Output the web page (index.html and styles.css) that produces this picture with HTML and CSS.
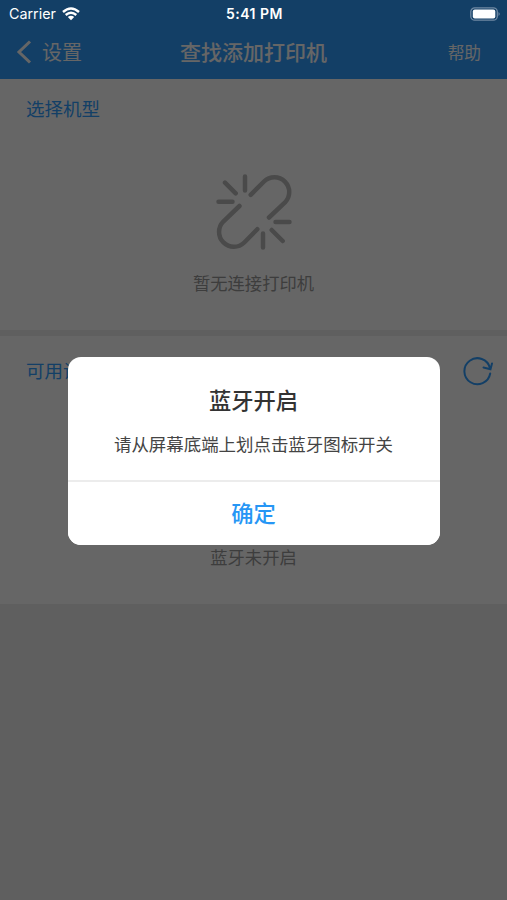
FILE: index.html
```
<!DOCTYPE html>
<html lang="zh-CN">
<head>
<meta charset="utf-8">
<title>查找添加打印机</title>
<link rel="stylesheet" href="styles.css">
</head>
<body>
<div class="screen">
  <header class="top">
    <nav class="nav">
      <div class="back">
        <svg width="18" height="26" viewBox="0 0 18 26"><path d="M14 2.500 3 13l11 10.500"/></svg>
        <span>设置</span>
      </div>
      <h1>查找添加打印机</h1>
      <span class="help">帮助</span>
    </nav>
  </header>
  <section class="panel connected">
    <h2>选择机型</h2>
    <svg class="link" width="76" height="76" viewBox="0 0 76 76">
      <path d="M34.700 20.800 48 7.500A14.850 14.850 0 0 1 69 28.500L53 43.500"/>
      <path d="M23.500 32 7.300 47.500A14.850 14.850 0 0 0 28.300 68.500L41.300 55.200"/>
      <path d="M9 8.700 19.700 19.300M29 2.500v14M2.500 27.700h14M59.500 48h14M55.700 56l11 11M47 59.500v14"/>
    </svg>
    <p>暂无连接打印机</p>
  </section>
  <section class="panel available">
    <div class="heading">
      <h2>可用设备</h2>
      <svg width="32" height="30" viewBox="0 0 32 30"><path d="M28.200 16.500A13 13 0 1 1 28 11M30 6.500 28.500 12.200 21.500 10.500"/></svg>
    </div>
    <p>蓝牙未开启</p>
  </section>
</div>
<div class="overlay">
  <div class="dialog">
    <div class="message">
      <h3>蓝牙开启</h3>
      <p>请从屏幕底端上划点击蓝牙图标开关</p>
    </div>
    <button>确定</button>
  </div>
</div>
<div class="status">
  <div class="carrier">Carrier
    <svg width="18" height="14" viewBox="0 0 18 14"><path d="M1 5Q9-2 17 5M3.700 8Q9 3.500 14.300 8"/><path class="dot" d="M5.800 10Q9 7.300 12.200 10L9 13.300Z"/></svg>
  </div>
  <time>5:41 PM</time>
  <svg class="battery" width="32" height="14" viewBox="0 0 32 14"><rect x="1.800" y=".8" width="26.500" height="12.400" rx="4"/><rect class="charge" x="3.800" y="2.500" width="22.500" height="9" rx="2"/><path d="M29.500 5Q32 7 29.500 9Z"/></svg>
</div>
</body>
</html>
```
FILE: styles.css
```
* { box-sizing: border-box; }
body { margin: 0; font-family: Inter, "Noto Sans CJK SC", sans-serif; }
h1, h2, h3, p { margin: 0; }
.screen { height: 900px; overflow: hidden; background: #eee; }
.top { height: 79px; padding-top: 25px; background: #309eff; }
.nav { display: grid; grid-template-columns: 1fr auto 1fr; align-items: center; height: 53px; padding: 0 26px 0 16px; color: #fff; }
.back { display: flex; align-items: center; gap: 8px; font-size: 20px; }
.back path { fill: none; stroke: #fff; stroke-width: 3; }
.nav h1 { font-size: 21px; font-weight: 500; margin-right: -10px; padding-bottom: 1px; }
.help { justify-self: end; font-size: 16.700px; }
.panel { background: #fff; }
.panel h2 { color: #309eff; font-size: 18.500px; line-height: 28px; font-weight: 400; }
.panel p { color: #999; font-size: 17.300px; line-height: 26px; text-align: center; }
.connected { height: 257px; padding: 16px 26px 0; border-bottom: 6px solid #eee; display: flex; flex-direction: column; }
.link { align-self: center; margin: 51px 0 21px; fill: none; stroke: #b9b9b9; stroke-width: 4.500; stroke-linecap: round; }
.available { height: 268px; padding-top: 21px; }
.heading { display: flex; justify-content: space-between; padding: 0 13px 0 26px; }
.heading svg { margin-bottom: -2px; }
.heading path { fill: none; stroke: #309eff; stroke-width: 2; stroke-linecap: round; }
.available p { margin-top: 160px; }
.overlay { position: absolute; inset: 0; display: flex; justify-content: center; align-items: flex-start; padding-top: 357px; background: rgba(0,0,0,.6); }
.dialog { width: 372px; height: 188px; border-radius: 13px; background: #fff; overflow: hidden; text-align: center; }
.message { height: 125px; padding-top: 28px; border-bottom: 2px solid #ececec; }
.message h3 { font-size: 22.300px; line-height: 32px; font-weight: 500; color: #333; }
.message p { margin-top: 15px; font-size: 17.450px; line-height: 26px; color: #444; }
.dialog button { width: 100%; height: 63px; border: 0; padding: 0 0 3px; background: #fff; color: #2696f5; font: 500 22.300px "Noto Sans CJK SC", sans-serif; }
.status { position: absolute; top: 0; left: 0; right: 0; height: 27px; display: grid; grid-template-columns: 1fr auto 1fr; align-items: center; padding: 0 6px 0 9px; color: #fff; font-size: 14.300px; }
.carrier { display: flex; align-items: center; gap: 6px; }
.status time { font-weight: 600; font-size: 14px; letter-spacing: .5px; margin-right: 1px; }
.carrier path { fill: none; stroke: #fff; stroke-width: 2.400; }
.carrier .dot { fill: #fff; stroke: none; }
.battery { justify-self: end; fill: #7089a3; }
.battery rect { fill: none; stroke: #7089a3; stroke-width: 1.300; }
.battery .charge { fill: #fff; stroke: none; }
```
